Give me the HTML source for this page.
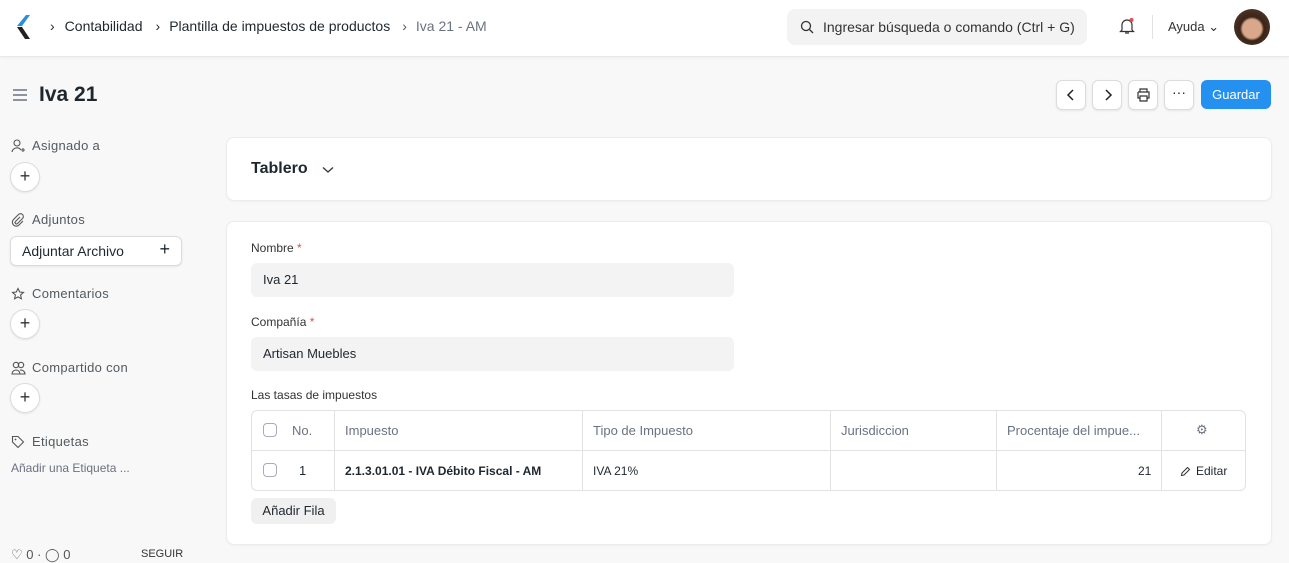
<!DOCTYPE html>
<html><head><meta charset="utf-8"><style>
*{box-sizing:border-box;margin:0;padding:0}
body{width:1289px;height:559px;overflow:hidden;background:#f8f8f8;font-family:"Liberation Sans",sans-serif;color:#1f272e;font-size:13px;position:relative}
.abs{position:absolute}
.nav{left:0;top:0;width:1289px;height:57px;background:#fff;border-bottom:1px solid #e8e8e8;box-shadow:0 1px 3px rgba(0,0,0,.04)}
.btn{position:absolute;height:30px;border-radius:6px;background:#fff;border:1px solid #dcdcdc;box-shadow:0 1px 2px rgba(0,0,0,.08)}
.card{position:absolute;background:#fff;border:1px solid #ececec;border-radius:8px;box-shadow:0 1px 2px rgba(0,0,0,.04)}
.side{font-size:13px;color:#525a60;letter-spacing:.3px}
.circ{position:absolute;width:30px;height:30px;border-radius:50%;background:#fff;border:1px solid #dcdcdc;box-shadow:0 1px 2px rgba(0,0,0,.08);text-align:center;line-height:27px;font-size:18px;color:#333}
.inp{position:absolute;background:#f3f3f4;border-radius:6px;height:34px;padding:9px 12px;font-size:13px}
.cb{position:absolute;width:14px;height:14px;border:1px solid #aab;border-radius:4px;background:#fff}
.th{position:absolute;color:#6b7280;font-size:13px}
</style></head><body>
<div class="abs nav"></div>
<svg class="abs" style="left:15px;top:14px" width="20" height="28" viewBox="0 0 20 28"><path d="M11 1 L2 12 L7 12 L15 1Z" fill="#2b8fd6"/><path d="M2 13 L10 25 L15 25 L7 13Z" fill="#222"/></svg>
<div class="abs" style="left:50px;top:18px;font-size:14px;color:#1f272e"><span style="margin-right:10px">›</span>Contabilidad<span style="margin:0 9px 0 13px">›</span>Plantilla de impuestos de productos<span style="margin:0 9px 0 12px;color:#555">›</span><span style="color:#6b7280">Iva 21 - AM</span></div>
<div class="abs" style="left:787px;top:9px;width:300px;height:36px;background:#f3f3f4;border-radius:8px"></div>
<svg class="abs" style="left:800px;top:20px" width="14" height="14" viewBox="0 0 14 14"><circle cx="6" cy="6" r="4.5" fill="none" stroke="#333" stroke-width="1.3"/><path d="M9.5 9.5L13 13" stroke="#333" stroke-width="1.3"/></svg>
<div class="abs" style="left:823px;top:19px;font-size:14px;color:#333">Ingresar búsqueda o comando (Ctrl + G)</div>
<svg class="abs" style="left:1117px;top:16px" width="20" height="20" viewBox="0 0 20 20"><path d="M5 14 V9 a5 5 0 0 1 10 0 V14 l1.5 1.5 H3.5Z M8 17 h4" fill="none" stroke="#333" stroke-width="1.2"/><circle cx="14.5" cy="4" r="2" fill="#e24c4c"/></svg>
<div class="abs" style="left:1152px;top:15px;width:1px;height:24px;background:#e2e2e2"></div>
<div class="abs" style="left:1168px;top:19px;font-size:13px;color:#333">Ayuda ⌄</div>
<div class="abs" style="left:1234px;top:9px;width:36px;height:36px;border-radius:50%;background:radial-gradient(circle at 50% 55%,#d9a78b 0 35%,#3a2418 45%,#5a4030 100%)"></div>
<svg class="abs" style="left:12px;top:88px" width="16" height="14"><path d="M1 2h14M1 7h14M1 12h14" stroke="#6b7280" stroke-width="1.4"/></svg>
<div class="abs" style="left:39px;top:83px;font-size:21px;font-weight:bold">Iva 21</div>
<div class="btn" style="left:1056px;top:80px;width:30px"><svg style="margin:8px 0 0 9px" width="10" height="12" viewBox="0 0 10 12"><path d="M7 1 L2 6 L7 11" fill="none" stroke="#222" stroke-width="1.5"/></svg></div>
<div class="btn" style="left:1092px;top:80px;width:30px"><svg style="margin:8px 0 0 10px" width="10" height="12" viewBox="0 0 10 12"><path d="M3 1 L8 6 L3 11" fill="none" stroke="#222" stroke-width="1.5"/></svg></div>
<div class="btn" style="left:1128px;top:80px;width:30px"><svg style="margin:7px 0 0 7px" width="15" height="14" viewBox="0 0 15 14"><path d="M4 4V1h7v3M2 4h11v6h-2M4 10H2V4M4 8h7v5H4z" fill="none" stroke="#333" stroke-width="1.2"/></svg></div>
<div class="btn" style="left:1164px;top:80px;width:30px;text-align:center;line-height:22px;font-size:14px">···</div>
<div class="abs" style="left:1201px;top:80px;width:70px;height:29px;border-radius:6px;background:#2490ef;color:#fff;text-align:center;line-height:29px;font-size:13px">Guardar</div>

<svg class="abs" style="left:11px;top:139px" width="14" height="14" viewBox="0 0 14 14"><circle cx="6" cy="4" r="3" fill="none" stroke="#555" stroke-width="1.1"/><path d="M1 13a5 5 0 0 1 9-2M10 11h4M12 9v4" fill="none" stroke="#555" stroke-width="1.1"/></svg>
<div class="abs side" style="left:32px;top:138px">Asignado a</div>
<div class="circ" style="left:10px;top:162px">+</div>
<svg class="abs" style="left:11px;top:213px" width="14" height="14" viewBox="0 0 14 14"><path d="M9 4 L4.5 8.5 a1.3 1.3 0 0 0 2 2 L11.5 5.5 a2.6 2.6 0 0 0 -4 -4 L2.5 6.5 a3.8 3.8 0 0 0 5.5 5.5 L12 8" fill="none" stroke="#555" stroke-width="1.1"/></svg>
<div class="abs side" style="left:32px;top:212px">Adjuntos</div>
<div class="btn" style="left:10px;top:236px;width:172px"><span style="position:absolute;left:11px;top:6px;font-size:14px">Adjuntar Archivo</span><span style="position:absolute;right:11px;top:2px;font-size:18px">+</span></div>
<svg class="abs" style="left:11px;top:287px" width="14" height="14" viewBox="0 0 14 14"><path d="M7 1.5 L8.7 5 L12.5 5.4 L9.6 8 L10.4 11.8 L7 9.9 L3.6 11.8 L4.4 8 L1.5 5.4 L5.3 5Z" fill="none" stroke="#555" stroke-width="1.1"/></svg>
<div class="abs side" style="left:32px;top:286px">Comentarios</div>
<div class="circ" style="left:10px;top:309px">+</div>
<svg class="abs" style="left:11px;top:361px" width="15" height="14" viewBox="0 0 15 14"><circle cx="5" cy="4" r="2.7" fill="none" stroke="#555" stroke-width="1.1"/><circle cx="10" cy="4" r="2.7" fill="none" stroke="#555" stroke-width="1.1"/><path d="M1 13a4 4 0 0 1 8 0ZM9 13h5a4 4 0 0 0-5-3.8" fill="none" stroke="#555" stroke-width="1.1"/></svg>
<div class="abs side" style="left:32px;top:360px">Compartido con</div>
<div class="circ" style="left:10px;top:383px">+</div>
<svg class="abs" style="left:11px;top:435px" width="14" height="14" viewBox="0 0 14 14"><path d="M1.5 1.5 H7 L12.5 7 L7 12.5 L1.5 7Z" fill="none" stroke="#555" stroke-width="1.1"/><circle cx="4.5" cy="4.5" r="0.9" fill="#555"/></svg>
<div class="abs side" style="left:32px;top:434px">Etiquetas</div>
<div class="abs" style="left:11px;top:461px;font-size:12px;color:#6b7280">Añadir una Etiqueta ...</div>
<div class="abs" style="left:11px;top:547px;font-size:13px;color:#555">♡ 0 · ◯ 0</div>
<div class="abs" style="left:141px;top:548px;font-size:11px;color:#333">SEGUIR</div>

<div class="card" style="left:226px;top:137px;width:1046px;height:64px"></div>
<div class="abs" style="left:251px;top:160px;font-size:16px;font-weight:bold">Tablero</div>
<svg class="abs" style="left:322px;top:166px" width="12" height="8" viewBox="0 0 12 8"><path d="M1 1.5 L6 6 L11 1.5" fill="none" stroke="#333" stroke-width="1.3"/></svg>

<div class="card" style="left:226px;top:221px;width:1046px;height:324px"></div>
<div class="abs" style="left:251px;top:241px;font-size:12px;color:#333">Nombre <span style="color:#e24c4c">*</span></div>
<div class="inp" style="left:251px;top:263px;width:483px">Iva 21</div>
<div class="abs" style="left:251px;top:315px;font-size:12px;color:#333">Compañía <span style="color:#e24c4c">*</span></div>
<div class="inp" style="left:251px;top:337px;width:483px">Artisan Muebles</div>
<div class="abs" style="left:251px;top:388px;font-size:12px;color:#333">Las tasas de impuestos</div>
<div class="abs" style="left:251px;top:410px;width:995px;height:81px;border:1px solid #e2e2e2;border-radius:6px;overflow:hidden">
<div class="abs" style="left:0;top:39px;width:995px;height:1px;background:#e2e2e2"></div>
<div class="abs" style="left:82px;top:0;width:1px;height:81px;background:#e2e2e2"></div>
<div class="abs" style="left:330px;top:0;width:1px;height:81px;background:#e2e2e2"></div>
<div class="abs" style="left:578px;top:0;width:1px;height:81px;background:#e2e2e2"></div>
<div class="abs" style="left:744px;top:0;width:1px;height:81px;background:#e2e2e2"></div>
<div class="abs" style="left:909px;top:0;width:1px;height:81px;background:#e2e2e2"></div>
<div class="cb" style="left:11px;top:12px"></div>
<div class="th" style="left:40px;top:12px">No.</div>
<div class="th" style="left:93px;top:12px">Impuesto</div>
<div class="th" style="left:341px;top:12px">Tipo de Impuesto</div>
<div class="th" style="left:589px;top:12px">Jurisdiccion</div>
<div class="th" style="left:755px;top:12px">Procentaje del impue...</div>
<div class="th" style="left:944px;top:11px">⚙</div>
<div class="cb" style="left:11px;top:52px"></div>
<div class="abs" style="left:47px;top:52px">1</div>
<div class="abs" style="left:93px;top:53px;font-size:12px;font-weight:bold">2.1.3.01.01 - IVA Débito Fiscal - AM</div>
<div class="abs" style="left:341px;top:53px;font-size:12px">IVA 21%</div>
<div class="abs" style="left:886px;top:53px;font-size:12px">21</div>
<svg class="abs" style="left:928px;top:55px" width="11" height="11" viewBox="0 0 11 11"><path d="M1.5 9.5 L2 7 L7.5 1.5 L9.5 3.5 L4 9Z" fill="none" stroke="#333" stroke-width="1"/></svg>
<div class="abs" style="left:944px;top:53px;font-size:12px">Editar</div>
</div>
<div class="abs" style="left:251px;top:498px;width:85px;height:26px;background:#f0f0f1;border-radius:6px;text-align:center;line-height:26px;font-size:13px">Añadir Fila</div>
</body></html>
